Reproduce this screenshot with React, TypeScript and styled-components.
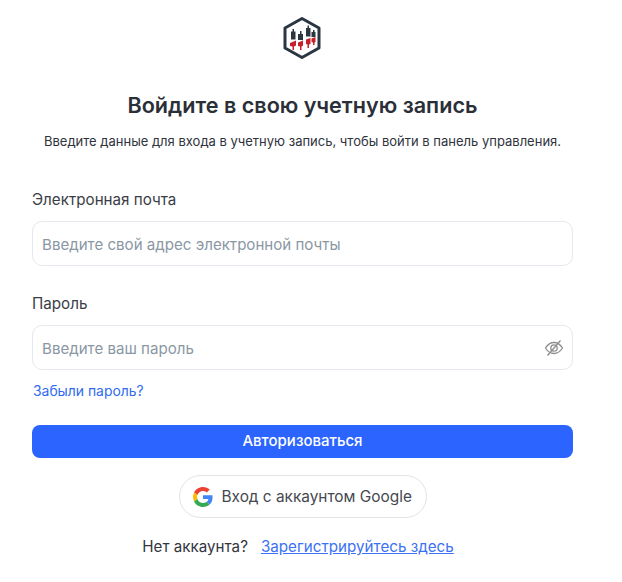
import { createGlobalStyle } from "styled-components";
import styled from "styled-components";

const Global = createGlobalStyle`
  html, body { margin: 0; padding: 0; background: #fff; }
  body { font-family: Inter, "Noto Sans", sans-serif; color: #2b2f38; }
  * { box-sizing: border-box; }
`;

const Page = styled.div`
  width: 622px;
  height: 582px;
  padding: 16px 49px 0 32px;
  overflow: hidden;
`;

const Header = styled.div`
  display: flex;
  flex-direction: column;
  align-items: center;
`;

const Title = styled.h1`
  margin: 31px 0 0;
  font-size: 21.6px;
  line-height: 28px;
  font-weight: 600;
  color: #2b2f38;
  white-space: nowrap;
`;

const Subtitle = styled.p`
  margin: 13px 0 0;
  font-size: 13px;
  line-height: 18px;
  color: #2f333c;
  white-space: nowrap;
`;

const Form = styled.form`
  display: flex;
  flex-direction: column;
  margin-top: 40px;
`;

const Label = styled.label<{ $top?: number }>`
  font-size: 15.2px;
  line-height: 20px;
  color: #3a3d46;
  margin-top: ${(p) => p.$top ?? 0}px;
`;

const Field = styled.div`
  margin-top: 11px;
  height: 45px;
  border: 1px solid #e6e8f0;
  border-radius: 10px;
  display: flex;
  align-items: center;
  justify-content: space-between;
  padding: 1px 8px 0 9px;
`;

const Placeholder = styled.span`
  font-size: 15.1px;
  color: #8a97a4;
`;

const Forgot = styled.a`
  margin: 12px 0 0 1px;
  font-size: 13.9px;
  line-height: 18px;
  color: #2f6bf0;
`;

const Submit = styled.button`
  margin-top: 25px;
  height: 33px;
  padding: 0 0 2px;
  border: 0;
  border-radius: 8px;
  background: #2b64ff;
  color: #fff;
  font: 500 15px Inter, sans-serif;
`;

const GoogleRow = styled.div`
  display: flex;
  justify-content: center;
  margin-top: 17px;
`;

const GoogleButton = styled.button`
  width: 248px;
  height: 43px;
  display: flex;
  align-items: center;
  gap: 9px;
  padding: 0 13px;
  background: #fff;
  border: 1px solid #e2e3e7;
  border-radius: 22px;
  font: 400 15.4px Inter, sans-serif;
  color: #454850;
  white-space: nowrap;
`;

const Footer = styled.div`
  display: flex;
  justify-content: center;
  gap: 13px;
  margin: 19px 9px 0 0;
  font-size: 15.2px;
  line-height: 20px;
  color: #33363e;
`;

const RegisterLink = styled.a`
  color: #3b71f3;
  text-decoration: underline;
`;

const LogoWrap = styled.div`
  margin-left: -2px;
  display: flex;
`;

const Logo = () => (
  <LogoWrap>
    <svg width="40" height="44" viewBox="0 0 40 44">
      <path d="M20 2.500 37 12v20L20 41.500 3 32V12Z" fill="none" stroke="#2a3642" strokeWidth="3" strokeLinejoin="round" />
      <g fill="#2a3642">
        <rect x="10.500" y="13" width="1.500" height="6" />
        <rect x="9" y="15.500" width="4.500" height="8" />
        <rect x="18" y="15" width="1.500" height="5" />
        <rect x="16" y="18" width="5" height="6" />
        <rect x="25.500" y="9.500" width="1.500" height="6" />
        <rect x="24" y="12" width="4.500" height="8.500" />
        <rect x="31" y="14" width="1.500" height="4" />
        <rect x="29.500" y="16" width="4" height="5" />
      </g>
      <g fill="#c8202b">
        <path d="M8 27l6-2.500v5l-2 1V34h-1.500v-3.500L8 30Z" />
        <path d="M16 26.500l5-2v5l-1.500 1V34H18v-3.500l-2-.5Z" />
        <path d="M24 23.500l4.500-1.500V28l-1.500.5V32h-1.500v-3.500L24 28Z" />
        <path d="M29.500 22.500l4-1.500v5l-1 .5V29H31v-2.500l-1.500-.5Z" />
      </g>
    </svg>
  </LogoWrap>
);

const EyeOff = () => (
  <svg width="20" height="20" viewBox="0 0 20 20" fill="none" stroke="#8e8e8e" strokeWidth="1.300">
    <path d="M1.500 10C4 6 7 4.500 10 4.500S16 6 18.500 10C16 14 13 15.500 10 15.500S4 14 1.500 10Z" />
    <circle cx="10" cy="10" r="3.200" />
    <path d="M3.500 17.500 16.500 2.500" />
  </svg>
);

const GoogleIcon = () => (
  <svg width="20" height="20" viewBox="0 0 48 48">
    <path fill="#EA4335" d="M24 9.500c3.500 0 6.700 1.200 9.200 3.600l6.900-6.900C35.900 2.400 30.500 0 24 0 14.600 0 6.500 5.400 2.600 13.200l8 6.200C12.500 13.700 17.800 9.500 24 9.500z" />
    <path fill="#4285F4" d="M46.900 24.500c0-1.600-.1-3.100-.4-4.500H24v9h12.900c-.6 3-2.200 5.500-4.700 7.200l7.700 6c4.500-4.200 7-10.300 7-17.700z" />
    <path fill="#FBBC05" d="M10.500 28.600c-.5-1.400-.8-3-.8-4.600s.3-3.200.8-4.600l-8-6.200C.9 16.400 0 20.100 0 24s.9 7.600 2.600 10.800l7.900-6.200z" />
    <path fill="#34A853" d="M24 48c6.500 0 11.900-2.100 15.900-5.800l-7.700-6c-2.200 1.400-4.900 2.300-8.200 2.300-6.200 0-11.500-4.200-13.400-9.900l-8 6.200C6.500 42.600 14.600 48 24 48z" />
  </svg>
);

export default function App() {
  return (
    <Page>
      <Global />
      <Header>
        <Logo />
        <Title>Войдите в свою учетную запись</Title>
        <Subtitle>Введите данные для входа в учетную запись, чтобы войти в панель управления.</Subtitle>
      </Header>
      <Form>
        <Label>Электронная почта</Label>
        <Field>
          <Placeholder>Введите свой адрес электронной почты</Placeholder>
        </Field>
        <Label $top={28}>Пароль</Label>
        <Field>
          <Placeholder>Введите ваш пароль</Placeholder>
          <EyeOff />
        </Field>
        <Forgot>Забыли пароль?</Forgot>
        <Submit type="button">Авторизоваться</Submit>
        <GoogleRow>
          <GoogleButton type="button">
            <GoogleIcon />
            Вход с аккаунтом Google
          </GoogleButton>
        </GoogleRow>
        <Footer>
          <span>Нет аккаунта?</span>
          <RegisterLink>Зарегистрируйтесь здесь</RegisterLink>
        </Footer>
      </Form>
    </Page>
  );
}
